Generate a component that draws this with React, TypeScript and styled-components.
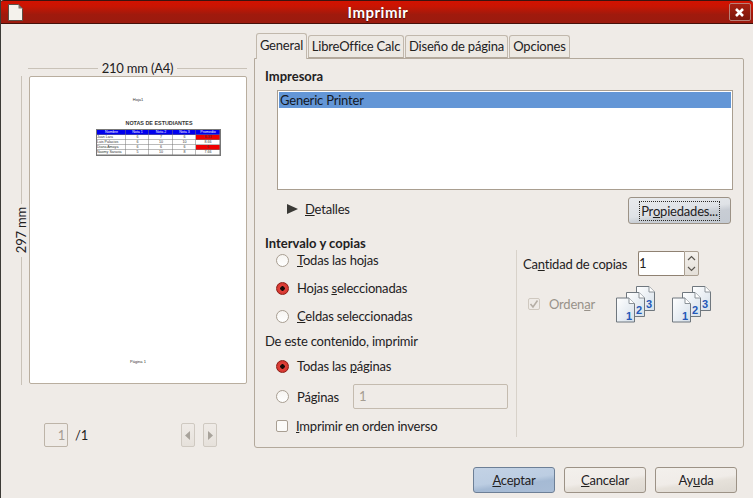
import React from 'react'
import styled, { createGlobalStyle } from 'styled-components'

const GlobalStyle = createGlobalStyle`
  html, body {
    margin: 0;
    padding: 0;
    background: #efebe7;
  }
  body {
    font-family: Lato, Roboto, "Liberation Sans", sans-serif;
    font-size: 13px;
    line-height: 16px;
    letter-spacing: -0.2px;
    color: #23211e;
  }
`

const Window = styled.div`
  width: 753px;
  height: 498px;
  box-sizing: border-box;
  border-left: 1px solid #3c3b37;
  background: #efebe7;
  display: flex;
  flex-direction: column;
  overflow: hidden;
`

const TitleBar = styled.div`
  height: 24px;
  margin-left: -1px;
  flex: none;
  box-sizing: border-box;
  border-top: 1px solid #3a1410;
  border-bottom: 1px solid #45100a;
  border-radius: 4px 4px 0 0;
  background: linear-gradient(#d41200 0%, #c81503 25%, #9f1a0d 62%, #9c1a0e 100%);
  display: flex;
  align-items: center;
  justify-content: space-between;
  padding: 0 2px 0 8px;
`

const TitleText = styled.span`
  color: #fff;
  font-weight: 700;
  font-size: 15px;
  letter-spacing: 0.5px;
  text-shadow: 0 1px 1px #4a0a04;
  margin-left: 4px;
`

const CloseButton = styled.div`
  width: 22px;
  height: 18px;
  box-sizing: border-box;
  border: 1px solid #b98078;
  border-radius: 2px;
  background: linear-gradient(#a82010, #7c170c);
  display: flex;
  align-items: center;
  justify-content: center;
`

const Main = styled.div`
  height: 424px;
  flex: none;
  display: flex;
  padding-right: 9px;
`

const PreviewColumn = styled.div`
  width: 253px;
  flex: none;
  box-sizing: border-box;
  padding: 36px 0 0 12px;
  display: flex;
  flex-direction: column;
`

const WidthRuler = styled.div`
  height: 16px;
  margin-left: 15px;
  width: 219px;
  display: flex;
  align-items: center;
  gap: 4px;
  white-space: nowrap;
`

const RulerLine = styled.div`
  flex: 1;
  height: 1px;
  background: #c9c2b8;
`

const PreviewRow = styled.div`
  display: flex;
  height: 309px;
`

const HeightRuler = styled.div`
  width: 16px;
  display: flex;
  flex-direction: column;
  align-items: center;
  flex: none;
`

const VerticalLine = styled.div`
  flex: 1;
  width: 1px;
  background: #c9c2b8;
`

const RotatedText = styled.div`
  writing-mode: vertical-rl;
  transform: rotate(180deg);
  padding: 3px 0;
  white-space: nowrap;
`

const Page = styled.div`
  width: 218px;
  height: 308px;
  box-sizing: border-box;
  border: 1px solid #b9ae9f;
  border-radius: 2px;
  background: #fff;
  display: flex;
  flex-direction: column;
  align-items: center;
  font-family: "Liberation Sans", sans-serif;
  letter-spacing: 0;
  color: #333;
`

const SheetHeader = styled.div`
  font-size: 4px;
  line-height: 6px;
  margin-top: 20px;
`

const SheetTitle = styled.div`
  font-size: 5.4px;
  line-height: 7px;
  font-weight: 700;
  margin: 17px 0 0 42px;
`

const SheetTable = styled.div`
  display: grid;
  grid-template-columns: 29px 23px 24px 23px 24px;
  grid-auto-rows: 5px;
  margin: 3px 0 0 41px;
  outline: 0.5px solid #777;
`

const SheetCell = styled.div<{ $head?: boolean; $red?: boolean; $left?: boolean }>`
  font-size: 3.6px;
  line-height: 5px;
  text-align: ${({ $left }) => ($left ? 'left' : 'center')};
  white-space: nowrap;
  overflow: hidden;
  box-shadow: inset 0 -0.5px 0 #777, inset -0.5px 0 0 #777;
  background: ${({ $head, $red }) => ($head ? '#0000ee' : $red ? '#f00000' : '#fff')};
  color: ${({ $head }) => ($head ? '#fff' : '#333')};
`

const SheetFooter = styled.div`
  font-size: 4px;
  line-height: 6px;
  margin-top: 204px;
`

const PageNav = styled.div`
  display: flex;
  align-items: center;
  height: 24px;
  margin: 38px 0 0 31px;
`

const PageBox = styled.div`
  width: 24px;
  height: 24px;
  box-sizing: border-box;
  border: 1px solid #bdb4a8;
  border-radius: 2px;
  text-align: right;
  padding-right: 2px;
  line-height: 22px;
  color: #a59d92;
`

const PageTotal = styled.span`
  margin-left: 7px;
  width: 106px;
`

const NavButton = styled.div`
  width: 14px;
  height: 24px;
  box-sizing: border-box;
  margin-right: 8px;
  border: 1px solid #cfc9c1;
  border-radius: 2px;
  background: linear-gradient(#efebe7, #e6e1db);
  display: flex;
  align-items: center;
  justify-content: center;
`

const SettingsColumn = styled.div`
  flex: 1;
  min-width: 0;
  padding-top: 9px;
  display: flex;
  flex-direction: column;
`

const TabStrip = styled.div`
  height: 25px;
  display: flex;
  align-items: flex-end;
  padding-left: 2px;
  gap: 1px;
  position: relative;
  z-index: 1;
`

const Tab = styled.div<{ $active?: boolean; $width: number }>`
  width: ${({ $width }) => $width}px;
  height: ${({ $active }) => ($active ? 26 : 23)}px;
  box-sizing: border-box;
  border: 1px solid #c1b8ac;
  border-bottom: ${({ $active }) => ($active ? 'none' : '1px solid #b3a99c')};
  border-radius: 3px 3px 0 0;
  margin-bottom: ${({ $active }) => ($active ? -1 : 0)}px;
  background: ${({ $active }) => ($active ? '#efebe7' : '#ede9e3')};
  text-align: center;
  line-height: ${({ $active }) => ($active ? 23 : 21)}px;
  padding-bottom: 2px;
  white-space: nowrap;
`

const Panel = styled.div`
  height: 390px;
  box-sizing: border-box;
  border: 1px solid #b3a99c;
  border-radius: 0 2px 3px 3px;
  padding: 8px 10px 0;
  display: flex;
  flex-direction: column;
`

const GroupTitle = styled.div`
  height: 18px;
  line-height: 18px;
  font-weight: 700;
  letter-spacing: 0;
`

const PrinterList = styled.div`
  height: 100px;
  margin: 5px 0 0 12px;
  box-sizing: border-box;
  border: 1px solid #a99e90;
  padding: 1px;
  background: #fff;
`

const PrinterRow = styled.div`
  height: 16px;
  line-height: 16px;
  background: #6396d6;
  padding-left: 1px;
  color: #14181e;
`

const DetailsRow = styled.div`
  height: 27px;
  margin: 7px 2px 0 22px;
  display: flex;
  align-items: center;
  justify-content: space-between;
`

const Expander = styled.div`
  display: flex;
  align-items: center;
  gap: 7px;
  padding-bottom: 3px;
`

const Arrow = styled.div`
  width: 0;
  height: 0;
  border-style: solid;
  border-width: 5.5px 0 5.5px 11px;
  border-color: transparent transparent transparent #3a3936;
`

const Key = styled.span`
  text-decoration: underline;
`

const PushButton = styled.div<{ $tone?: 'plain' | 'hover' | 'default' }>`
  width: 82px;
  height: 26px;
  box-sizing: border-box;
  border: 1px solid ${({ $tone }) => ($tone === 'default' ? '#6d7f96' : '#9c9286')};
  border-radius: 3px;
  display: flex;
  align-items: center;
  justify-content: center;
  background: ${({ $tone }) =>
    $tone === 'default'
      ? 'linear-gradient(172deg, #c3d2e5 0%, #bccde2 50%, #a5bad4 65%, #a9bdd6 100%)'
      : $tone === 'hover'
        ? 'linear-gradient(172deg, #e9ebee 0%, #dfe2e6 50%, #c8cdd4 65%, #c4cad2 100%)'
        : 'linear-gradient(172deg, #f3f0ec 0%, #f0ece8 50%, #e6e1da 62%, #ddd8d1 100%)'};
`

const PropertiesButton = styled(PushButton)`
  width: 103px;
  height: 27px;
`

const FocusRing = styled.span`
  border: 1px dotted #2c2a27;
  padding: 0 1px;
  line-height: 18px;
`

const RangeGrid = styled.div`
  display: grid;
  grid-template-columns: 251px 1fr;
  margin-top: 10px;
`

const RangeColumn = styled.div`
  display: flex;
  flex-direction: column;
`

const OptionRow = styled.div<{ $gap?: number }>`
  min-height: 16px;
  margin: ${({ $gap }) => $gap ?? 12}px 0 0 11px;
  display: flex;
  align-items: center;
  gap: 8px;
`

const Radio = styled.div<{ $on?: boolean }>`
  width: 13px;
  height: 13px;
  flex: none;
  box-sizing: border-box;
  border-radius: 50%;
  border: 1px solid ${({ $on }) => ($on ? '#8c1c14' : '#a89e92')};
  background: ${({ $on }) =>
    $on
      ? 'radial-gradient(circle, #1a0a08 0 2px, #e2413a 2.5px, #c9302a 100%)'
      : 'linear-gradient(#f6f4f1, #fff)'};
`

const CheckBox = styled.div<{ $muted?: boolean }>`
  width: 12px;
  height: 12px;
  flex: none;
  box-sizing: border-box;
  border: 1px solid ${({ $muted }) => ($muted ? '#cfc8bf' : '#a89e92')};
  border-radius: 2px;
  background: ${({ $muted }) => ($muted ? '#efebe7' : '#fbfaf8')};
  display: flex;
  align-items: center;
  justify-content: center;
`

const SubTitle = styled.div`
  height: 16px;
  line-height: 16px;
  margin-top: 9px;
`

const PagesLabel = styled.span`
  width: 48px;
`

const PagesInput = styled.div`
  width: 155px;
  height: 25px;
  box-sizing: border-box;
  border: 1px solid #c4bbaf;
  border-radius: 2px;
  padding-left: 5px;
  line-height: 23px;
  color: #a59d92;
`

const CopiesColumn = styled.div`
  margin-top: 16px;
  height: 187px;
  box-sizing: border-box;
  border-left: 1px solid #d8d2ca;
  padding: 1px 0 0 6px;
`

const CopiesRow = styled.div`
  height: 25px;
  display: flex;
  align-items: center;
`

const CopiesLabel = styled.span`
  width: 115px;
  white-space: nowrap;
`

const CopiesInput = styled.div`
  width: 46px;
  height: 25px;
  box-sizing: border-box;
  border: 1px solid #8f8172;
  border-right: none;
  border-radius: 2px 0 0 2px;
  background: #fff;
  line-height: 23px;
`

const Spinner = styled.div`
  width: 15px;
  height: 25px;
  box-sizing: border-box;
  border: 1px solid #a99e90;
  border-radius: 0 2px 2px 0;
  background: linear-gradient(#f4f1ed, #e4dfd8);
  display: flex;
  align-items: center;
  justify-content: center;
`

const CollateRow = styled.div`
  height: 36px;
  margin-top: 10px;
  padding-left: 5px;
  display: flex;
  align-items: center;
`

const CollateLabel = styled.span`
  margin-left: 9px;
  width: 67px;
  color: #98928a;
`

const CollateIcons = styled.div`
  display: flex;
  gap: 17px;
`

const ButtonBar = styled.div`
  flex: none;
  margin-top: 19px;
  padding-right: 16px;
  display: flex;
  justify-content: flex-end;
  gap: 9px;
`

const rows = [
  ['Juan Lara', '6', '7', '6', '6.33'],
  ['Luis  Palacios', '6', '10', '10', '8.66'],
  ['Diana Amaya', '6', '6', '6', '6'],
  ['Naomy Saravia', '5', '10', '8', '7.66'],
]

const StackPage: React.FC<{ x: number; y: number; n: string }> = ({ x, y, n }) => (
  <g transform={`translate(${x} ${y})`}>
    <path d="M.5.5H13L18.5 6V24.5H.5Z" fill="url(#sheet)" stroke="#6f777e" />
    <path d="M13 .5V6H18.5" fill="#fff" stroke="#8b9298" />
    <text x="13" y="22" fontSize="11" fontWeight="700" fill="#2458b8" fontFamily="Liberation Sans, sans-serif" textAnchor="middle">
      {n}
    </text>
  </g>
)

const CollateIcon: React.FC = () => (
  <svg width="39" height="37" viewBox="0 0 39 37">
    <defs>
      <linearGradient id="sheet" x1="0" y1="0" x2="1" y2="1">
        <stop offset="0" stopColor="#fff" />
        <stop offset="1" stopColor="#d5dfe9" />
      </linearGradient>
    </defs>
    <StackPage x={20} y={0} n="3" />
    <StackPage x={10} y={6} n="2" />
    <StackPage x={0} y={11.5} n="1" />
  </svg>
)

const App: React.FC = () => (
  <Window>
    <GlobalStyle />
    <TitleBar>
      <svg width="15" height="17" viewBox="0 0 15 17">
        <path d="M.5.5H10.5L14.5 4.5V16.5H.5Z" fill="#f4f2ec" stroke="#5b5148" />
        <path d="M10.5.5V4.5H14.5Z" fill="#7d756c" />
      </svg>
      <TitleText>Imprimir</TitleText>
      <CloseButton>
        <svg width="11" height="11" viewBox="0 0 11 11">
          <path d="M2 2L9 9M9 2L2 9" stroke="#fff" strokeWidth="2.6" />
        </svg>
      </CloseButton>
    </TitleBar>
    <Main>
      <PreviewColumn>
        <WidthRuler>
          <RulerLine />
          210 mm (A4)
          <RulerLine />
        </WidthRuler>
        <PreviewRow>
          <HeightRuler>
            <VerticalLine />
            <RotatedText>297 mm</RotatedText>
            <VerticalLine />
          </HeightRuler>
          <Page>
            <SheetHeader>Hoja1</SheetHeader>
            <SheetTitle>NOTAS DE ESTUDIANTES</SheetTitle>
            <SheetTable>
              {['Nombre', 'Nota 1', 'Nota 2', 'Nota 3', 'Promedio'].map((h) => (
                <SheetCell key={h} $head>
                  {h}
                </SheetCell>
              ))}
              {rows.map((row) =>
                row.map((value, i) => (
                  <SheetCell key={row[0] + i} $left={i === 0} $red={i === 4 && Number(value) < 7}>
                    {value}
                  </SheetCell>
                )),
              )}
            </SheetTable>
            <SheetFooter>Página 1</SheetFooter>
          </Page>
        </PreviewRow>
        <PageNav>
          <PageBox>1</PageBox>
          <PageTotal>/1</PageTotal>
          <NavButton>
            <svg width="6" height="9" viewBox="0 0 6 9">
              <path d="M5 0V9L0 4.5Z" fill="#a8a39b" />
            </svg>
          </NavButton>
          <NavButton>
            <svg width="6" height="9" viewBox="0 0 6 9">
              <path d="M1 0V9L6 4.5Z" fill="#a8a39b" />
            </svg>
          </NavButton>
        </PageNav>
      </PreviewColumn>
      <SettingsColumn>
        <TabStrip>
          <Tab $active $width={51}>General</Tab>
          <Tab $width={96}>LibreOffice Calc</Tab>
          <Tab $width={103}>Diseño de página</Tab>
          <Tab $width={61}>Opciones</Tab>
        </TabStrip>
        <Panel>
          <GroupTitle>Impresora</GroupTitle>
          <PrinterList>
            <PrinterRow>Generic Printer</PrinterRow>
          </PrinterList>
          <DetailsRow>
            <Expander>
              <Arrow />
              <span><Key>D</Key>etalles</span>
            </Expander>
            <PropertiesButton $tone="hover">
              <FocusRing>Pr<Key>o</Key>piedades...</FocusRing>
            </PropertiesButton>
          </DetailsRow>
          <RangeGrid>
            <RangeColumn>
              <GroupTitle>Intervalo y copias</GroupTitle>
              <OptionRow $gap={0}>
                <Radio />
                <span><Key>T</Key>odas las hojas</span>
              </OptionRow>
              <OptionRow>
                <Radio $on />
                <span>Hojas <Key>s</Key>eleccionadas</span>
              </OptionRow>
              <OptionRow>
                <Radio />
                <span><Key>C</Key>eldas seleccionadas</span>
              </OptionRow>
              <SubTitle>De este contenido, imprimir</SubTitle>
              <OptionRow $gap={9}>
                <Radio $on />
                <span>Todas las <Key>p</Key>áginas</span>
              </OptionRow>
              <OptionRow $gap={10}>
                <Radio />
                <PagesLabel>Pá<Key>g</Key>inas</PagesLabel>
                <PagesInput>1</PagesInput>
              </OptionRow>
              <OptionRow $gap={9}>
                <CheckBox />
                <span><Key>I</Key>mprimir en orden inverso</span>
              </OptionRow>
            </RangeColumn>
            <CopiesColumn>
              <CopiesRow>
                <CopiesLabel>Ca<Key>n</Key>tidad de copias</CopiesLabel>
                <CopiesInput>1</CopiesInput>
                <Spinner>
                  <svg width="9" height="17" viewBox="0 0 9 17">
                    <path d="M1 5L4.5 1.5L8 5M1 12L4.5 15.5L8 12" fill="none" stroke="#5a564f" strokeWidth="1.2" />
                  </svg>
                </Spinner>
              </CopiesRow>
              <CollateRow>
                <CheckBox $muted>
                  <svg width="10" height="10" viewBox="0 0 10 10">
                    <path d="M1.5 5L4 8L8.5 1.5" fill="none" stroke="#b5aea5" strokeWidth="1.6" />
                  </svg>
                </CheckBox>
                <CollateLabel>Orden<Key>a</Key>r</CollateLabel>
                <CollateIcons>
                  <CollateIcon />
                  <CollateIcon />
                </CollateIcons>
              </CollateRow>
            </CopiesColumn>
          </RangeGrid>
        </Panel>
      </SettingsColumn>
    </Main>
    <ButtonBar>
      <PushButton $tone="default"><span><Key>A</Key>ceptar</span></PushButton>
      <PushButton><span><Key>C</Key>ancelar</span></PushButton>
      <PushButton><span>Ay<Key>u</Key>da</span></PushButton>
    </ButtonBar>
  </Window>
)

export default App
